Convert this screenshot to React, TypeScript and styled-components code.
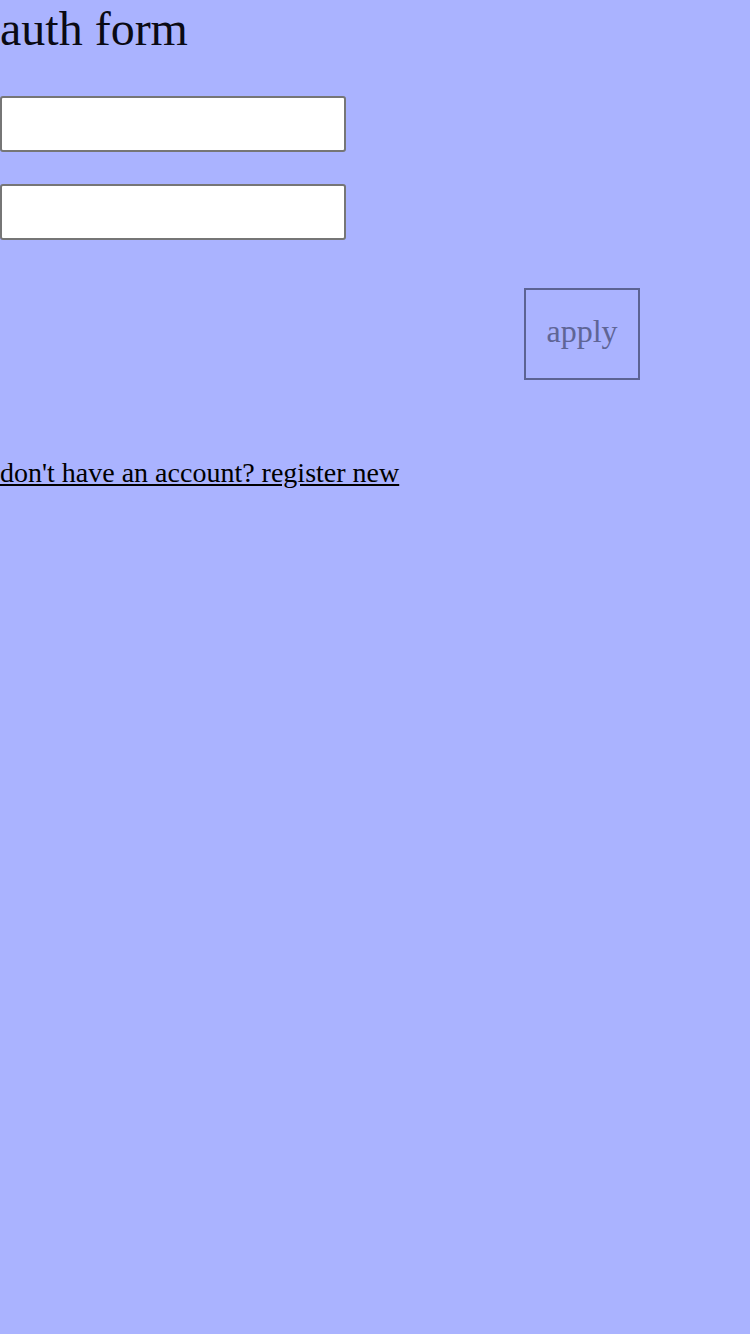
import React, {useState} from "react";
import styled, {createGlobalStyle} from "styled-components";

const GlobalStyle = createGlobalStyle`
  html, body {
    margin: 0;
    padding: 0;
    background: #aab3ff;
  }
  body {
    font-family: "Liberation Serif", "Times New Roman", serif;
    color: #000;
  }
`;

const Page = styled.div`
  min-height: 1334px;
  background: #aab3ff;
`;

const Title = styled.h1`
  margin: 0;
  font-size: 48px;
  font-weight: 400;
  line-height: 58px;
  color: #0a0a14;
`;

const Form = styled.form`
  display: flex;
  flex-direction: column;
  gap: 32px;
  margin-top: 38px;
`;

const Field = styled.input`
  display: block;
  box-sizing: border-box;
  width: 346px;
  height: 56px;
  margin: 0;
  padding: 0 8px;
  border: 2px solid #767676;
  border-radius: 3px;
  background: #fff;
  font-size: 24px;
  font-family: inherit;
`;

const Actions = styled.div`
  display: flex;
  justify-content: flex-end;
  width: 640px;
  margin-top: 16px;
`;

const ApplyButton = styled.button`
  box-sizing: border-box;
  width: 116px;
  height: 92px;
  border: 2px solid #5c6393;
  background: transparent;
  color: #5f6596;
  font-family: "Liberation Serif", "Times New Roman", serif;
  font-size: 32px;
  padding: 0 0 6px;
  cursor: pointer;
`;

const RegisterLink = styled.a`
  display: block;
  margin-top: 77px;
  font-size: 28px;
  line-height: 32px;
  color: #000;
  text-decoration: underline;
`;

export default function App() {
    const [login, setLogin] = useState('');
    const [password, setPassword] = useState('');

    return (
        <Page>
            <GlobalStyle/>
            <Title>auth form</Title>
            <Form onSubmit={e => e.preventDefault()}>
                <Field value={login} onChange={e => setLogin(e.target.value)}/>
                <Field type="password" value={password} onChange={e => setPassword(e.target.value)}/>
                <Actions>
                    <ApplyButton type="submit">apply</ApplyButton>
                </Actions>
            </Form>
            <RegisterLink href="#">don't have an account? register new</RegisterLink>
        </Page>
    );
}
